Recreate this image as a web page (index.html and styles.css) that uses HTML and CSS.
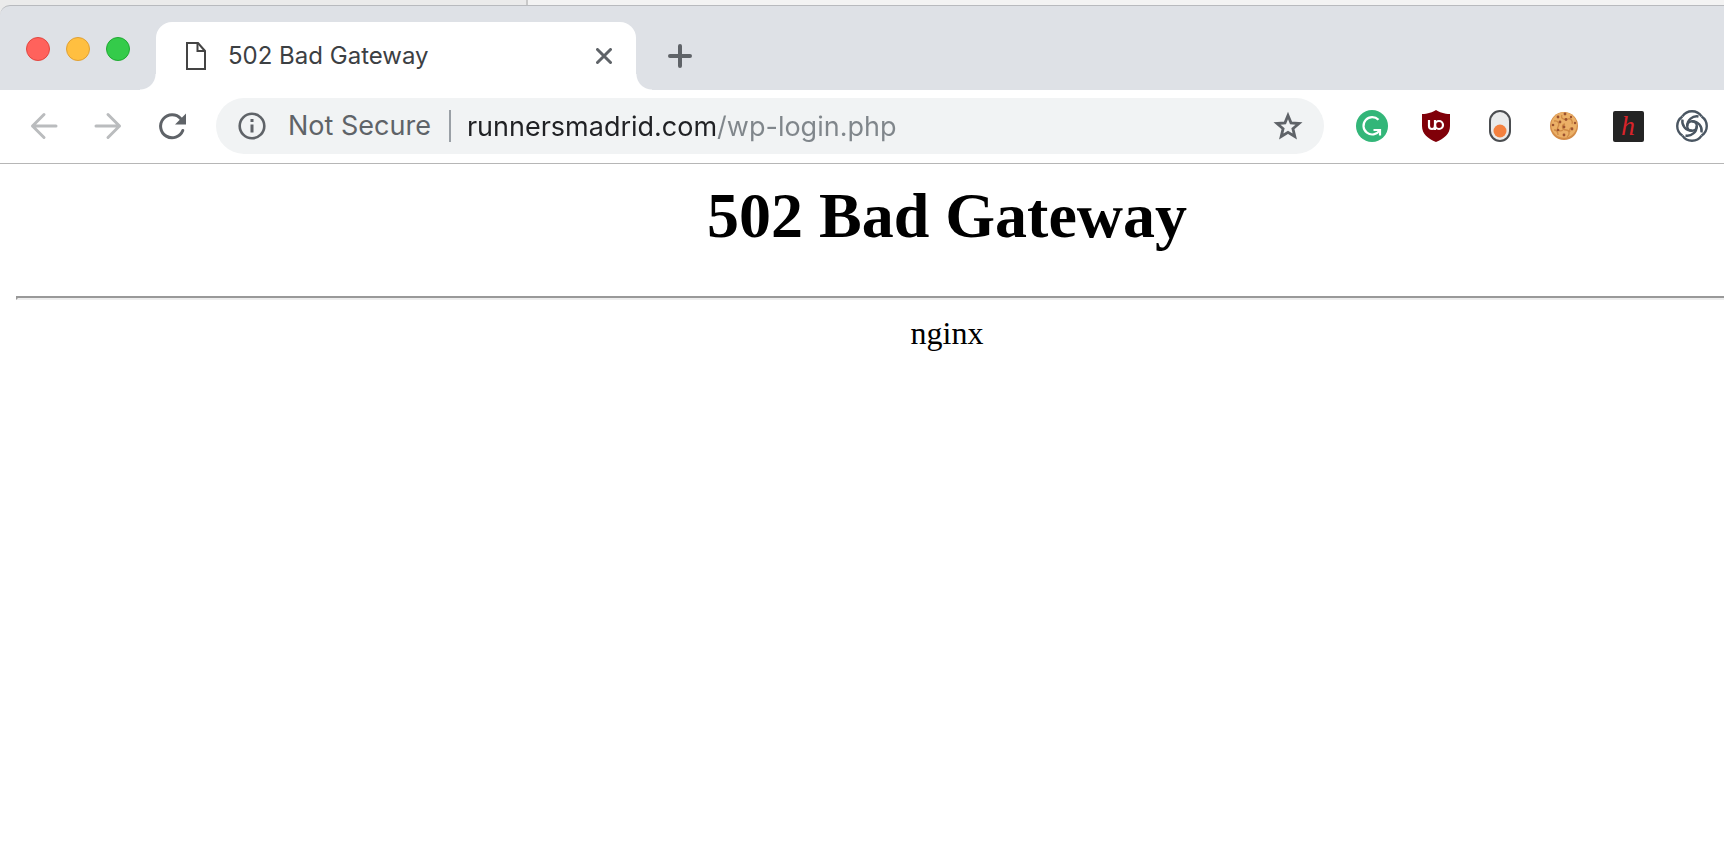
FILE: index.html
```html
<!DOCTYPE html>
<html lang="en">
<head>
  <meta charset="UTF-8" />
  <title>502 Bad Gateway</title>
  <meta name="viewport" content="width=device-width,initial-scale=1" />
  <link rel="stylesheet" href="styles.css">
</head>
<body>
  <div class="desktop">
    <div class="desktop-left"></div>
  </div>

  <div class="window">
    <header class="tabstrip">
      <div class="lights">
        <button class="light close" aria-label="Close window"></button>
        <button class="light minimize" aria-label="Minimize window"></button>
        <button class="light zoom" aria-label="Zoom window"></button>
      </div>
      <div class="tab">
        <svg class="doc" width="20" height="28" viewBox="0 0 20 28" fill="none" stroke="#444" stroke-width="2">
          <path d="M1 1h11l7 8v18H1z" />
          <path d="M11.5 1v8H19" />
        </svg>
        <span class="tab-title">502 Bad Gateway</span>
        <button class="tab-close" aria-label="Close tab">
          <svg width="16" height="16" viewBox="0 0 16 16" stroke="#5f6368" stroke-width="3" stroke-linecap="round">
            <path d="M1.5 1.5l13 13M14.5 1.5l-13 13" />
          </svg>
        </button>
      </div>
      <button class="new-tab" aria-label="New tab">
        <svg width="24" height="24" viewBox="0 0 24 24" stroke="#5f6368" stroke-width="4" stroke-linecap="round">
          <path d="M12 2v20M2 12h20" />
        </svg>
      </button>
    </header>

    <nav class="toolbar">
      <button class="tool" aria-label="Back">
        <svg width="32" height="32" viewBox="0 0 32 32" fill="none" stroke="#babcbe" stroke-width="3" stroke-linecap="round" stroke-linejoin="round">
          <path d="M28 16H4.500M16 4.500L4.500 16 16 27.500" />
        </svg>
      </button>
      <button class="tool" aria-label="Forward">
        <svg width="32" height="32" viewBox="0 0 32 32" fill="none" stroke="#babcbe" stroke-width="3" stroke-linecap="round" stroke-linejoin="round">
          <path d="M4 16h23.500M16 4.500L27.500 16 16 27.500" />
        </svg>
      </button>
      <button class="tool" aria-label="Reload">
        <svg width="32" height="32" viewBox="0 0 32 32">
          <path d="M26.800 20.500A11.500 11.500 0 1 1 24.800 8.700" fill="none" stroke="#5f6368" stroke-width="3" stroke-linecap="round" />
          <path d="M30 3.500V14.500H19z" fill="#5f6368" />
        </svg>
      </button>

      <div class="omnibox">
        <button class="security">
          <svg width="28" height="28" viewBox="0 0 28 28">
            <circle cx="14" cy="14" r="12.300" fill="none" stroke="#5f6368" stroke-width="2.600" />
            <path d="M14 7v3M14 12.500V20.500" stroke="#5f6368" stroke-width="3" />
          </svg>
          <span>Not Secure</span>
        </button>
        <input class="url" type="text" value="runnersmadrid.com/wp-login.php" aria-label="Address" spellcheck="false">
        <button class="star" aria-label="Bookmark this page">
          <svg width="32" height="32" viewBox="0 0 32 32" fill="none" stroke="#5f6368" stroke-width="2.800">
            <path d="M16 5.500l3 7.400 8 .6-6.100 5.200 1.900 7.800-6.800-4.200-6.800 4.200 1.900-7.800L5 13.500l8-.6z" />
          </svg>
        </button>
      </div>

      <div class="extensions">
        <button class="tool" aria-label="Grammarly">
          <svg width="32" height="32" viewBox="0 0 32 32" fill="none" stroke="#fff" stroke-width="2.200">
            <circle cx="16" cy="16" r="16" fill="#33b679" stroke="none" />
            <path d="M22.500 9.800A8.700 8.700 0 1 0 23.500 20.500" />
            <path d="M17.500 20h6.500v5.500" />
          </svg>
        </button>
        <button class="tool" aria-label="uBlock Origin">
          <svg width="32" height="32" viewBox="0 0 32 32" fill="none" stroke="#fff" stroke-width="2.200">
            <path d="M16 0c3 2 8.500 4 14 4v12c0 8-6 12.500-14 16C8 28.500 2 24 2 16V4c5.500 0 11-2 14-4z" fill="#800009" stroke="none" />
            <path d="M9 10v6a3 3 0 0 0 6 0v-6" />
            <path d="M15 15v5" />
            <circle cx="19" cy="15" r="4" />
          </svg>
        </button>
        <button class="tool" aria-label="Toggle">
          <svg width="32" height="32" viewBox="0 0 32 32">
            <rect x="6" y="1" width="20" height="30" rx="10" fill="#eaebeb" stroke="#4b4d50" stroke-width="2" />
            <circle cx="16" cy="21" r="6.500" fill="#f4813f" />
          </svg>
        </button>
        <button class="tool" aria-label="Cookies">
          <svg width="32" height="32" viewBox="0 0 32 32">
            <circle cx="16" cy="16" r="14" fill="#d38c48" />
            <circle cx="16" cy="15" r="12.800" fill="#ebb067" />
            <path d="M6 11c4-1 6 3 4 6s2 5 5 3M14 5c-2 4 3 5 6 4s5 2 4 5M17 14c-4 1-3 6 1 6s4 5 1 7M25 18c-3-1-4 2-3 4M6 20c3 0 4 2 4 5" fill="none" stroke="#cf8a45" stroke-width="1.300" />
            <g fill="#9c5230">
              <circle cx="10" cy="7" r="1.400" />
              <circle cx="17" cy="4" r="1.400" />
              <circle cx="23" cy="7" r="1.200" />
              <circle cx="12" cy="12" r="1.400" />
              <circle cx="18" cy="9.500" r="1.400" />
              <circle cx="27" cy="13" r="1.200" />
              <circle cx="5" cy="15" r="1.300" />
              <circle cx="10" cy="20" r="1.300" />
              <circle cx="16" cy="17" r="1.400" />
              <circle cx="24" cy="19" r="1.400" />
              <circle cx="16" cy="25" r="1.400" />
            </g>
          </svg>
        </button>
        <button class="tool" aria-label="Honey">
          <span class="badge-h">h</span>
        </button>
        <button class="tool" aria-label="Knot">
          <svg width="32" height="32" viewBox="0 0 32 32" fill="none" stroke="#4a5662" stroke-width="2.400">
            <circle cx="16" cy="16" r="4.800" />
            <path id="petal" d="M6.400 6.400A11.500 11.500 0 0 1 25.600 6.400M11.200 16A9.500 9.500 0 0 1 22.500 6.500" />
            <use href="#petal" transform="rotate(90 16 16)" />
            <use href="#petal" transform="rotate(180 16 16)" />
            <use href="#petal" transform="rotate(270 16 16)" />
          </svg>
        </button>
      </div>
    </nav>

    <main class="page">
      <h1>502 Bad Gateway</h1>
      <hr>
      <p>nginx</p>
    </main>
  </div>
</body>
</html>
```
FILE: styles.css
```css
body {
  margin: 0;
  background: #fff;
  font-family: Inter, Roboto, "Liberation Sans", sans-serif;
}
button {
  display: flex;
  align-items: center;
  justify-content: center;
  margin: 0;
  padding: 0;
  border: 0;
  background: none;
  font: inherit;
  color: inherit;
}

/* strip of the window behind */
.desktop {
  height: 20px;
  margin-bottom: -15px;
  background: #f3f3f3;
}
.desktop-left {
  box-sizing: border-box;
  width: 528px;
  height: 100%;
  border-right: 2px solid #c9c9c9;
  background: #ebebeb;
}

.window {
  position: relative;
}
.tabstrip {
  display: flex;
  box-sizing: border-box;
  height: 85px;
  padding-top: 16px;
  border-top: 1px solid #b8babe;
  border-top-left-radius: 10px;
  background: #dee1e6;
}
.lights {
  display: flex;
  gap: 16px;
  width: 130px;
  padding: 15px 0 0 26px;
}
.light {
  box-sizing: border-box;
  width: 24px;
  height: 24px;
  border: 1px solid;
  border-radius: 50%;
}
.close {
  border-color: #e2463f;
  background: #ff625c;
}
.minimize {
  border-color: #e0a033;
  background: #ffbf40;
}
.zoom {
  border-color: #1fa932;
  background: #34cb4a;
}

.tab {
  position: relative;
  display: flex;
  align-items: center;
  box-sizing: border-box;
  width: 480px;
  padding: 0 24px 0 30px;
  border-radius: 16px 16px 0 0;
  background: #fff;
}
/* curved feet of the active tab */
.tab::before,
.tab::after {
  content: "";
  position: absolute;
  bottom: 0;
  width: 16px;
  height: 16px;
}
.tab::before {
  right: 100%;
  background: radial-gradient(circle at 0 0, transparent 15px, #fff 16px);
}
.tab::after {
  left: 100%;
  background: radial-gradient(circle at 100% 0, transparent 15px, #fff 16px);
}
.tab-title {
  flex: 1;
  margin-left: 22px;
  font-size: 24px;
  line-height: 32px;
  color: #3c4043;
}
.new-tab {
  width: 24px;
  height: 24px;
  margin: 22px 0 0 32px;
}

.toolbar {
  display: flex;
  align-items: center;
  box-sizing: border-box;
  height: 74px;
  padding: 0 0 1px 12px;
  border-bottom: 1px solid #b6b6b6;
}
.tool {
  flex: none;
  width: 64px;
  height: 56px;
}
.omnibox {
  display: flex;
  flex: 1;
  align-items: center;
  min-width: 0;
  height: 56px;
  margin: 0 16px 0 12px;
  padding: 0 20px 0 22px;
  border-radius: 28px;
  background: #f1f3f4;
  font-size: 27px;
}
.security {
  gap: 22px;
  padding-right: 18px;
  border-right: 2px solid #9aa0a6;
  line-height: 32px;
  white-space: nowrap;
  color: #5f6368;
}
/* host is dark, path is grey */
.url {
  flex: 1;
  min-width: 0;
  height: 40px;
  margin: 0 16px;
  padding: 0;
  border: 0;
  outline: 0;
  background: linear-gradient(90deg, #202124 250px, #80868b 250px);
  -webkit-background-clip: text;
  background-clip: text;
  font: inherit;
  color: transparent;
  caret-color: #202124;
}
.extensions {
  display: flex;
}
.badge-h {
  width: 31px;
  height: 31px;
  border-radius: 2px;
  background: #242424;
  font: italic 28px/30px "Liberation Serif", serif;
  text-align: center;
  color: #d8232a;
}

.page {
  padding: 16px 0 16px 16px;
  font-family: "Liberation Serif", "Times New Roman", serif;
  font-size: 32px;
  line-height: 34px;
  text-align: center;
  color: #000;
}
.page h1,
.page p {
  margin: 0;
  padding-left: 154px;
}
.page h1 {
  margin-bottom: 44px;
  font-size: 64px;
  line-height: 72px;
}
.page hr {
  height: 0;
  margin: 0 0 16px;
  border: 2px solid;
  border-color: #999 #eee #eee #999;
  border-right: 0;
}
```
